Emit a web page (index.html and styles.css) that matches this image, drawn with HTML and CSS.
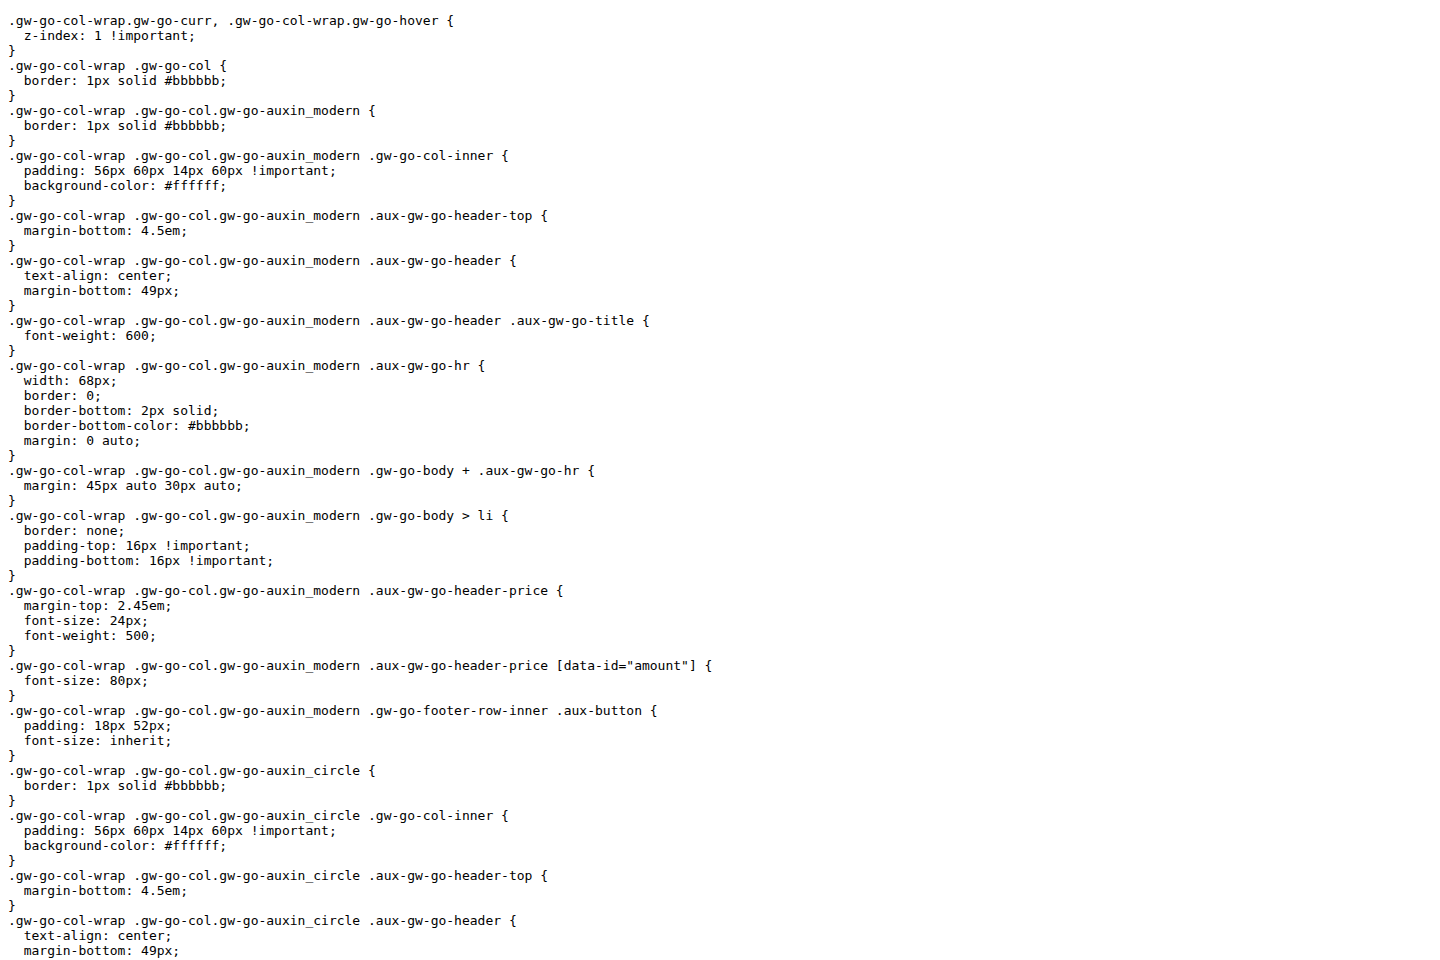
FILE: index.html
```
<!DOCTYPE html>
<html>
<head>
<meta charset="utf-8">
<link rel="stylesheet" href="styles.css">
</head>
<body class="page">
<pre class="source">.gw-go-col-wrap.gw-go-curr, .gw-go-col-wrap.gw-go-hover {
  z-index: 1 !important;
}
.gw-go-col-wrap .gw-go-col {
  border: 1px solid #bbbbbb;
}
.gw-go-col-wrap .gw-go-col.gw-go-auxin_modern {
  border: 1px solid #bbbbbb;
}
.gw-go-col-wrap .gw-go-col.gw-go-auxin_modern .gw-go-col-inner {
  padding: 56px 60px 14px 60px !important;
  background-color: #ffffff;
}
.gw-go-col-wrap .gw-go-col.gw-go-auxin_modern .aux-gw-go-header-top {
  margin-bottom: 4.5em;
}
.gw-go-col-wrap .gw-go-col.gw-go-auxin_modern .aux-gw-go-header {
  text-align: center;
  margin-bottom: 49px;
}
.gw-go-col-wrap .gw-go-col.gw-go-auxin_modern .aux-gw-go-header .aux-gw-go-title {
  font-weight: 600;
}
.gw-go-col-wrap .gw-go-col.gw-go-auxin_modern .aux-gw-go-hr {
  width: 68px;
  border: 0;
  border-bottom: 2px solid;
  border-bottom-color: #bbbbbb;
  margin: 0 auto;
}
.gw-go-col-wrap .gw-go-col.gw-go-auxin_modern .gw-go-body + .aux-gw-go-hr {
  margin: 45px auto 30px auto;
}
.gw-go-col-wrap .gw-go-col.gw-go-auxin_modern .gw-go-body &gt; li {
  border: none;
  padding-top: 16px !important;
  padding-bottom: 16px !important;
}
.gw-go-col-wrap .gw-go-col.gw-go-auxin_modern .aux-gw-go-header-price {
  margin-top: 2.45em;
  font-size: 24px;
  font-weight: 500;
}
.gw-go-col-wrap .gw-go-col.gw-go-auxin_modern .aux-gw-go-header-price [data-id="amount"] {
  font-size: 80px;
}
.gw-go-col-wrap .gw-go-col.gw-go-auxin_modern .gw-go-footer-row-inner .aux-button {
  padding: 18px 52px;
  font-size: inherit;
}
.gw-go-col-wrap .gw-go-col.gw-go-auxin_circle {
  border: 1px solid #bbbbbb;
}
.gw-go-col-wrap .gw-go-col.gw-go-auxin_circle .gw-go-col-inner {
  padding: 56px 60px 14px 60px !important;
  background-color: #ffffff;
}
.gw-go-col-wrap .gw-go-col.gw-go-auxin_circle .aux-gw-go-header-top {
  margin-bottom: 4.5em;
}
.gw-go-col-wrap .gw-go-col.gw-go-auxin_circle .aux-gw-go-header {
  text-align: center;
  margin-bottom: 49px;
}
</pre>
</body>
</html>
```
FILE: styles.css
```
html {
  background: #ffffff;
}
.page {
  margin: 0;
  padding: 13px 8px;
  background: #ffffff;
  color: #000000;
}
.source {
  margin: 0;
  font-family: "DejaVu Sans Mono", monospace;
  font-size: 13px;
  word-wrap: break-word;
  white-space: pre-wrap;
}
```
